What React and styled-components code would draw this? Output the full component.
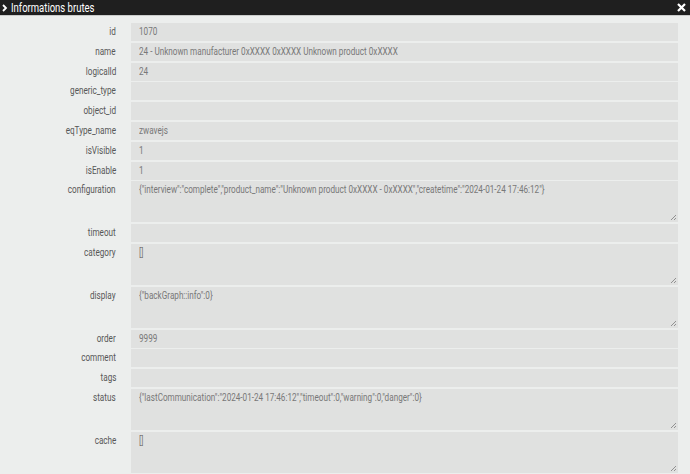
import React from 'react';
import styled, { createGlobalStyle } from 'styled-components';

const GlobalStyle = createGlobalStyle`
	html, body {
		margin: 0;
		padding: 0;
		background: #eceeed;
		font-family: Roboto, 'Liberation Sans', sans-serif;
		overflow: hidden;
	}
`;

// the original uses a condensed face, squeeze Roboto to match
const Condensed = styled.span`
	display: inline-block;
	white-space: nowrap;
	transform: scaleX(${(p) => p.$scale || 0.74});
	transform-origin: ${(p) => (p.$right ? 'right' : 'left')} center;
`;

const Header = styled.header`
	height: 15px;
	background-color: #1f1f1f;
	border-bottom: 1px solid #c9cbca;
	color: #fff;
	display: flex;
	align-items: center;
	justify-content: space-between;
	padding: 0 4px 0 2px;
	font-size: 12.5px;

	.title {
		display: flex;
		align-items: center;
		gap: 3px;
	}
`;

const Form = styled.div`
	display: flex;
	flex-direction: column;
	gap: 1.8px;
	padding: 7px 12px 0 0;
`;

const Row = styled.div`
	display: grid;
	grid-template-columns: 116px 1fr;
	column-gap: 15px;
	align-items: start;

	label {
		text-align: right;
		font-size: 11px;
		font-weight: 400;
		color: #575757;
		line-height: 18px;
	}
`;

const Field = styled.div`
	position: relative;
	background-color: #e0e1e0;
	height: ${(p) => (p.$area ? '41px' : '18px')};
	line-height: 18px;
	padding: 0 8px;
	font-size: 11px;
	color: #787878;
	white-space: nowrap;
	overflow: hidden;
`;

const Grip = styled.svg`
	position: absolute;
	right: 1px;
	bottom: 1px;
`;

const fields = [
	['id', '1070'],
	['name', '24 - Unknown manufacturer 0xXXXX 0xXXXX Unknown product 0xXXXX'],
	['logicalId', '24'],
	['generic_type', ''],
	['object_id', ''],
	['eqType_name', 'zwavejs'],
	['isVisible', '1'],
	['isEnable', '1'],
	['configuration', '{"interview":"complete","product_name":"Unknown product 0xXXXX - 0xXXXX","createtime":"2024-01-24 17:46:12"}', true],
	['timeout', ''],
	['category', '[]', true],
	['display', '{"backGraph::info":0}', true],
	['order', '9999'],
	['comment', ''],
	['tags', ''],
	['status', '{"lastCommunication":"2024-01-24 17:46:12","timeout":0,"warning":0,"danger":0}', true],
	['cache', '[]', true],
];

function App() {
	return (
		<>
			<GlobalStyle />
			<Header>
				<span className='title'>
					<svg width='6' height='8' viewBox='0 0 6 8'>
						<path d='M1 1 L4 4 L1 7' stroke='#fff' strokeWidth='1.8' fill='none' />
					</svg>
					<Condensed $scale={0.76}>Informations brutes</Condensed>
				</span>
				<svg width='9' height='9' viewBox='0 0 9 9'>
					<path d='M1 1 L8 8 M8 1 L1 8' stroke='#fff' strokeWidth='2.2' />
				</svg>
			</Header>
			<Form>
				{fields.map(([name, value, area]) => (
					<Row key={name}>
						<label>
							<Condensed $right>{name}</Condensed>
						</label>
						<Field $area={area}>
							<Condensed>{value}</Condensed>
							{area && (
								<Grip width='7' height='7' viewBox='0 0 7 7'>
									<path d='M1 6 L6 1 M4 6 L6 4' stroke='#888' strokeWidth='0.9' />
								</Grip>
							)}
						</Field>
					</Row>
				))}
			</Form>
		</>
	);
}

export default App;
